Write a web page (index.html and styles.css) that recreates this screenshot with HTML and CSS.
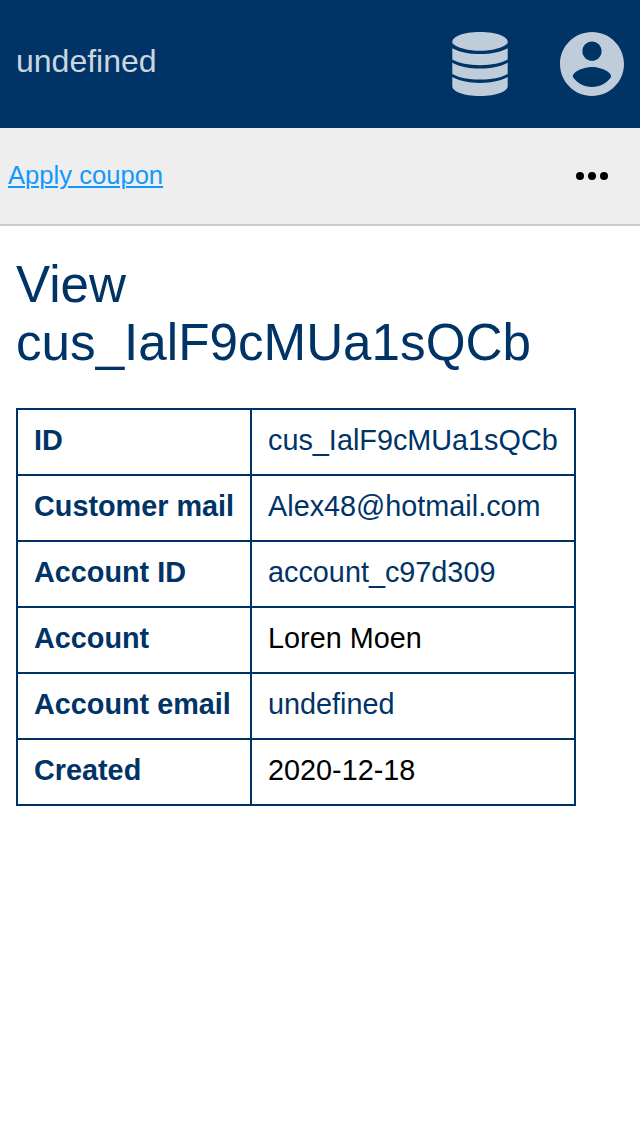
FILE: index.html
```html
<!DOCTYPE html>
<html lang="en">
<head>
<meta charset="utf-8">
<title>View customer</title>
<link rel="stylesheet" href="styles.css">
</head>
<body>
<header class="header">
  <span class="title">undefined</span>
  <nav class="icons">
    <svg class="icon" viewBox="0 0 64 64" aria-label="Database">
      <path d="M4.300 11.200V9.800C4.300 4.800 15 0 32 0s27.700 4.800 27.700 9.800v1.400C55 16 43.500 18.800 32 18.800S9 16 4.300 11.200z"/>
      <path d="M4.300 16.300C11 20 20.500 22.100 32 22.100s21-2.100 27.700-5.800v11.200C53 31.200 43.500 33.200 32 33.200S11 31.200 4.300 27.500z"/>
      <path d="M4.300 30.700C11 34.400 20.500 36.500 32 36.500s21-2.100 27.700-5.800v11.200C53 45.600 43.500 47.600 32 47.600S11 45.600 4.300 41.900z"/>
      <path d="M4.300 45.100C11 48.800 20.500 50.900 32 50.900s21-2.100 27.700-5.800v9.200C59.700 59.200 49 64 32 64S4.300 59.200 4.300 54.300z"/>
    </svg>
    <svg class="icon" viewBox="2 2 20 20" aria-label="Account">
      <path d="M12 2C6.480 2 2 6.480 2 12s4.480 10 10 10 10-4.480 10-10S17.520 2 12 2zm0 3c1.660 0 3 1.340 3 3s-1.340 3-3 3-3-1.340-3-3 1.340-3 3-3zm0 14.200c-2.500 0-4.710-1.280-6-3.220.03-1.990 4-3.080 6-3.080 1.990 0 5.970 1.090 6 3.080-1.290 1.940-3.500 3.220-6 3.220z"/>
    </svg>
  </nav>
</header>
<div class="toolbar">
  <a class="action" href="#">Apply coupon</a>
  <svg class="more" viewBox="0 0 32 8" aria-label="More">
    <circle cx="4" cy="4" r="4"/><circle cx="16" cy="4" r="4"/><circle cx="28" cy="4" r="4"/>
  </svg>
</div>
<main class="content">
  <h1 class="heading">View cus_IalF9cMUa1sQCb</h1>
  <table class="details">
    <tr><th>ID</th><td>cus_IalF9cMUa1sQCb</td></tr>
    <tr><th>Customer mail</th><td>Alex48@hotmail.com</td></tr>
    <tr><th>Account ID</th><td>account_c97d309</td></tr>
    <tr><th>Account</th><td class="plain">Loren Moen</td></tr>
    <tr><th>Account email</th><td>undefined</td></tr>
    <tr><th>Created</th><td class="plain">2020-12-18</td></tr>
  </table>
</main>
</body>
</html>
```
FILE: styles.css
```css
body {
  margin: 0;
  background: #fff;
  color: #036;
  font-family: "Liberation Sans", Arial, sans-serif;
}

.header {
  display: flex;
  align-items: center;
  justify-content: space-between;
  box-sizing: border-box;
  height: 128px;
  padding: 0 16px;
  background: #036;
}

.title {
  padding-bottom: 6px;
  color: #ccd6e0;
  font-size: 32px;
  line-height: 36px;
}

.icons {
  display: flex;
  gap: 48px;
}

.icon {
  width: 64px;
  height: 64px;
  fill: #bfccd9;
}

.toolbar {
  display: flex;
  align-items: center;
  justify-content: space-between;
  height: 96px;
  padding: 0 32px 0 8px;
  border-bottom: 2px solid #ccc;
  background: #eee;
}

.action {
  padding-bottom: 2px;
  color: #1199ff;
  font-size: 25.6px;
  line-height: 30px;
  text-decoration-thickness: 2px;
  text-underline-offset: 2px;
}

.more {
  width: 32px;
  height: 8px;
}

.content {
  padding: 30px 16px;
}

.heading {
  margin: 0 0 36px;
  font-size: 51.2px;
  font-weight: 400;
  line-height: 58px;
}

.details {
  border-collapse: collapse;
  font-size: 28.8px;
  line-height: 32px;
}

.details th,
.details td {
  padding: 14px 16px 18px;
  border: 2px solid #036;
  text-align: left;
}

.details .plain {
  color: #000;
}
```
